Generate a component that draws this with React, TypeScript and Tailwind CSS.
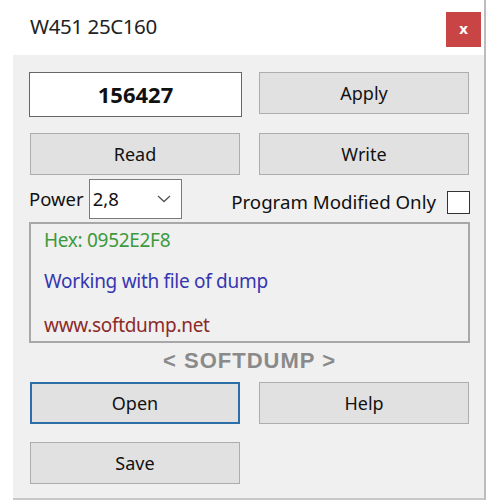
import React from 'react';

const btnBase =
  'h-[42px] w-[210px] bg-[#e1e1e1] text-[18px] text-[#111] flex items-center justify-center';
const btn = btnBase + ' border border-[#adadad]';

export default function App() {
  return (
    <div className="w-[500px] h-[500px] bg-white overflow-hidden" style={{ fontFamily: '"Noto Sans", "Open Sans", sans-serif' }}>
      <div className="ml-[13px] w-[473px] h-[500px] border-r-2 border-[#bcbcbc] flex flex-col">
        {/* title bar */}
        <div className="h-[55px] bg-white flex items-start justify-between pl-[17px] pr-[3px]">
          <span className="mt-[11px] text-[20.5px] text-[#222] tracking-[-0.4px]">W451 25C160</span>
          <div className="mt-[12px] w-[35px] h-[35px] bg-[#c94444] flex items-center justify-center text-white text-[15px] font-bold leading-none pb-[2px]">
            x
          </div>
        </div>

        {/* body */}
        <div className="flex-1 bg-[#f0f0f0] border-b-2 border-[#c8c8c8] pl-[16px] pt-[17px]">
          <div className="flex gap-[17px] h-[45px]">
            <div className="w-[213px] h-[45px] bg-white border border-[#666] flex items-center justify-center text-[22px] font-bold text-[#111]">
              156427
            </div>
            <div className={btn + ' w-[209px]'}>Apply</div>
          </div>

          <div className="flex gap-[19px] mt-[16px] pl-[1px]">
            <div className={btn}>Read</div>
            <div className={btn + ' w-[209px]'}>Write</div>
          </div>

          <div className="flex items-center h-[40px] mt-[4px] pr-[14px]">
            <span className="text-[18.5px] text-[#111] mr-[5px]">Power</span>
            <div className="w-[93px] h-[40px] bg-white border border-[#7a7a7a] flex items-center justify-between pl-[3px] pr-[10px]">
              <span className="text-[18.5px] text-[#111]">2,8</span>
              <svg width="14" height="8" viewBox="0 0 14 8" fill="none">
                <path d="M1 1l6 5.5L13 1" stroke="#555" strokeWidth="1.3" />
              </svg>
            </div>
            <span className="ml-auto text-[18.7px] text-[#111] mt-[6px]">Program Modified Only</span>
            <div className="ml-[11px] mt-[6px] w-[23px] h-[23px] bg-white border border-[#333]" />
          </div>

          <div className="mt-[3px] w-[441px] h-[121px] border-2 border-[#a8a8a8] bg-[#f0f0f0] pl-[13px] pt-[5px] flex flex-col text-[19px] leading-[22px]">
            <span className="text-[#3c9a3c] tracking-[-0.3px]">Hex: 0952E2F8</span>
            <span className="mt-[19px] text-[#3636b0] tracking-[-0.3px]">Working with file of dump</span>
            <span className="mt-[22px] text-[#8c2a2a] tracking-[-0.3px]">www.softdump.net</span>
          </div>

          <div
            className="w-[441px] text-center text-[22px] font-bold text-[#8a8a8a] leading-[32px] mt-[2px] tracking-[1px]"
            style={{ fontFamily: '"Liberation Sans", Arial, sans-serif' }}
          >
            &lt; SOFTDUMP &gt;
          </div>

          <div className="flex gap-[19px] mt-[5px] pl-[1px]">
            <div className={btnBase + ' border-2 border-[#2d6ea6]'}>Open</div>
            <div className={btn + ' w-[209px]'}>Help</div>
          </div>

          <div className="flex mt-[18px] pl-[1px]">
            <div className={btn}>Save</div>
          </div>
        </div>
      </div>
    </div>
  );
}
